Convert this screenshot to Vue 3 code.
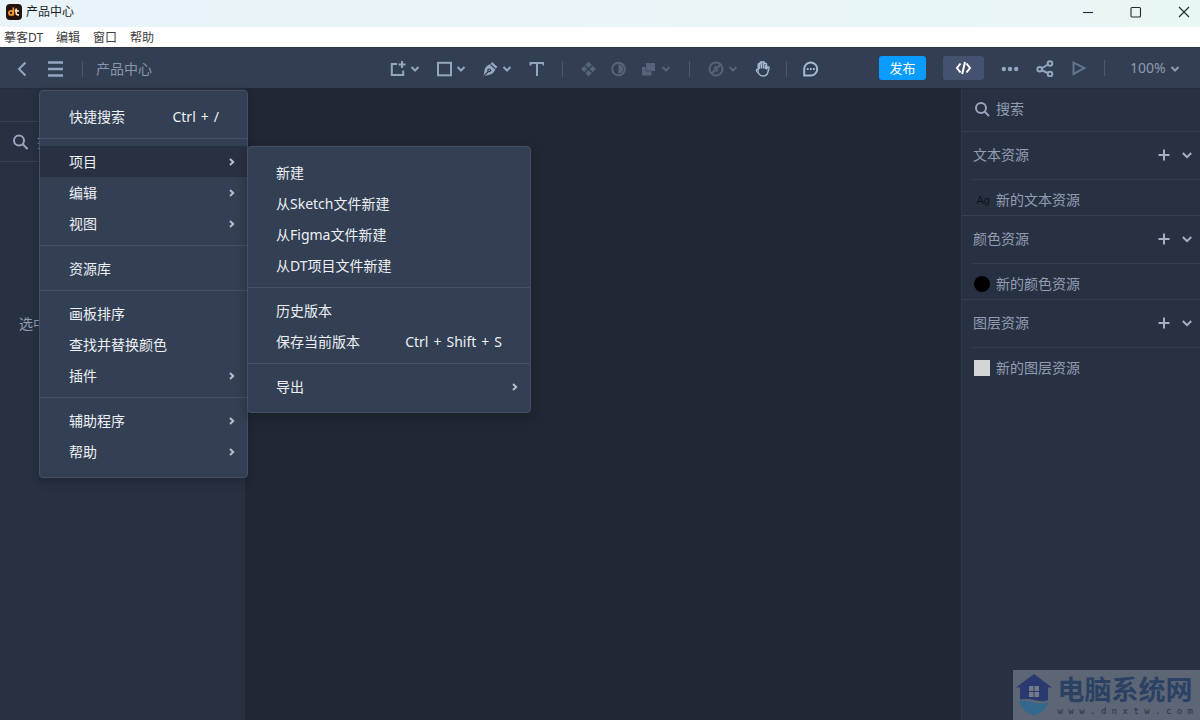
<script setup>
const appMenus = ['摹客DT', '编辑', '窗口', '帮助']

const menuGroups = [
  [{ label: '快捷搜索', keys: ['Ctrl', '+', '/'] }],
  [
    { label: '项目', more: true, open: true },
    { label: '编辑', more: true },
    { label: '视图', more: true },
  ],
  [{ label: '资源库' }],
  [{ label: '画板排序' }, { label: '查找并替换颜色' }, { label: '插件', more: true }],
  [
    { label: '辅助程序', more: true },
    { label: '帮助', more: true },
  ],
]

const projectGroups = [
  [
    { label: '新建' },
    { label: '从Sketch文件新建' },
    { label: '从Figma文件新建' },
    { label: '从DT项目文件新建' },
  ],
  [{ label: '历史版本' }, { label: '保存当前版本', keys: ['Ctrl', '+', 'Shift', '+', 'S'] }],
  [{ label: '导出', more: true }],
]

const resources = [
  { title: '文本资源', item: '新的文本资源', kind: 'text' },
  { title: '颜色资源', item: '新的颜色资源', kind: 'color' },
  { title: '图层资源', item: '新的图层资源', kind: 'layer' },
]
</script>

<template>
  <div class="app">
    <header class="titlebar">
      <svg class="logo" viewBox="0 0 16 16" aria-hidden="true">
        <rect width="16" height="16" rx="4" fill="#24120d" />
        <g fill="none" stroke-width="1.7">
          <circle cx="5" cy="8.9" r="2" stroke="#f39a35" />
          <path d="M7.3 3.5v8" stroke="#f39a35" />
          <path d="M10.2 4.6v4.7q0 1.6 1.6 1.6h1.2M8.8 6.8h4" stroke="#fbe3c0" />
        </g>
      </svg>
      <span class="app-name">产品中心</span>
      <div class="window-buttons">
        <button aria-label="最小化"><svg viewBox="0 0 12 12"><path d="M1 6.5h10" /></svg></button>
        <button aria-label="最大化"><svg viewBox="0 0 12 12"><rect x="1" y="1.5" width="9.500" height="9.500" rx="1" /></svg></button>
        <button aria-label="关闭"><svg viewBox="0 0 12 12"><path d="M1 1l10 10M11 1L1 11" /></svg></button>
      </div>
    </header>

    <nav class="menubar">
      <button v-for="m in appMenus" :key="m">{{ m }}</button>
    </nav>

    <div class="toolbar">
      <div class="side-left">
        <button class="back" aria-label="返回">
          <svg width="10" height="16" viewBox="0 0 10 16"><path d="M8.500 1.500L2 8l6.500 6.500" class="line" /></svg>
        </button>
        <button class="burger" aria-label="菜单">
          <svg width="16" height="16" viewBox="0 0 16 16"><path d="M1 1.500h15M1 8h15M1 14.500h15" class="line heavy" /></svg>
        </button>
        <i class="sep"></i>
        <span class="doc-name">产品中心</span>
      </div>

      <div class="tools">
        <div class="tool-group">
          <button class="tool" aria-label="画板">
            <svg class="icon" viewBox="0 0 16 16"><path d="M7 3H1.800v11h11.400V9.500M12 0v7M8.500 3.500h7" class="line" /></svg>
            <svg class="caret" viewBox="0 0 10 10"><path d="M1.500 3L5 6.500 8.500 3" class="line" /></svg>
          </button>
          <button class="tool" aria-label="形状">
            <svg class="icon" viewBox="0 0 16 16"><rect x="2" y="1.800" width="13" height="12.500" class="line" /></svg>
            <svg class="caret" viewBox="0 0 10 10"><path d="M1.500 3L5 6.500 8.500 3" class="line" /></svg>
          </button>
          <button class="tool" aria-label="钢笔">
            <svg class="icon" viewBox="0 0 16 16">
              <path d="M10.200 1l5.300 5-2 1.800c-.8 3-2.600 5.200-6 6L1.500 15.200l1-6.200c.9-3.300 2.800-5 5.900-6z" fill="currentColor" />
              <path d="M1.800 15l4.500-4.500M8.500 3.500l4.800 4.400" stroke="#323e51" stroke-width="1.100" fill="none" />
              <circle cx="7.200" cy="9.300" r="1.900" fill="#323e51" />
              <circle cx="7.200" cy="9.300" r=".7" fill="currentColor" />
            </svg>
            <svg class="caret" viewBox="0 0 10 10"><path d="M1.500 3L5 6.500 8.500 3" class="line" /></svg>
          </button>
          <button class="tool" aria-label="文本">
            <svg class="icon" viewBox="0 0 16 16"><path d="M2.500 4.500V2h13v2.500M9 2v13" class="line" /></svg>
          </button>
        </div>
        <i class="sep"></i>
        <div class="tool-group dim">
          <button class="tool" aria-label="组件" disabled>
            <svg class="icon" viewBox="0 0 16 16"><path fill="currentColor" d="M7.500.5l3.200 3.200-3.200 3.200-3.200-3.200zM3.300 4.800L6.500 8l-3.200 3.200L.1 8zM11.700 4.800L14.900 8l-3.200 3.200L8.500 8zM7.500 9.100l3.200 3.200-3.200 3.200-3.200-3.200z" /></svg>
          </button>
          <button class="tool" aria-label="蒙版" disabled>
            <svg class="icon" viewBox="0 0 16 16"><circle cx="7.500" cy="8" r="6.300" class="line" /><path d="M7.500 3.300v9.400a4.700 4.700 0 0 0 0-9.400z" fill="currentColor" /></svg>
          </button>
          <button class="tool" aria-label="布尔运算" disabled>
            <svg class="icon" viewBox="0 0 16 16"><path d="M5 2h9v8h-3.500v4.500H1V6h4z" fill="currentColor" /><path d="M5 6.500V10h5.500" stroke="#323e51" stroke-width=".6" fill="none" /></svg>
            <svg class="caret" viewBox="0 0 10 10"><path d="M1.500 3L5 6.500 8.500 3" class="line" /></svg>
          </button>
        </div>
        <i class="sep"></i>
        <div class="tool-group">
          <button class="tool dim" aria-label="切图" disabled>
            <svg class="icon" viewBox="0 0 16 16"><circle cx="8" cy="8" r="6.500" class="line" /><path d="M12.500 3.500l-9 9" class="line" /><path d="M4.800 7.500L8 4.600l.8 2.600zM11.200 8.500L8 11.400l-.8-2.600z" fill="currentColor" /></svg>
            <svg class="caret" viewBox="0 0 10 10"><path d="M1.500 3L5 6.500 8.500 3" class="line" /></svg>
          </button>
          <button class="tool" aria-label="抓手">
            <svg class="icon bright" viewBox="0 0 16 16">
              <path d="M4.200 9V3.600q0-1.200 1-1.200t1 1.200V1.900q0-1.100 1.100-1.100t1.100 1.100v-.2q0-1 1-1t1 1.200v1.500q0-1.100 1.100-1.100t1.100 1.100v5.200l.6-1.800q.5-1.100 1.300-.8t.5 1.500l-1.300 4.200q-1 3.300-4.600 3.300-3 0-4.200-2.300L2.700 10.200q-.6-1.300.2-1.700t1.300.5z" class="thin" />
              <path d="M5.300 8V3M7.300 7.500V2M9.400 7.500V2M11.400 8V4" stroke="currentColor" stroke-width="1.500" fill="none" />
            </svg>
          </button>
          <i class="divider"></i>
          <button class="tool" aria-label="评论">
            <svg class="icon bright" viewBox="0 0 16 16"><path d="M1.200 14.500V8A6.500 6.500 0 1 1 7.700 14.500z" class="line" /><path d="M3.800 8h1.800M6.900 8h1.800M10 8h1.800" class="line" /></svg>
          </button>
        </div>
      </div>

      <div class="side-right">
        <button class="publish">发布</button>
        <button class="code" aria-label="代码">
          <svg width="17" height="16" viewBox="0 0 17 16"><path d="M5.500 3.500L2 8l3.500 4.500M11.500 3.500L15 8l-3.500 4.500M10 2L7.200 14" fill="none" stroke="#fff" stroke-width="2" /></svg>
        </button>
        <button aria-label="更多">
          <svg width="18" height="16" viewBox="0 0 18 16" fill="currentColor"><circle cx="2.800" cy="9" r="2.200" /><circle cx="9" cy="9" r="2.200" /><circle cx="15.200" cy="9" r="2.200" /></svg>
        </button>
        <button aria-label="分享">
          <svg width="18" height="18" viewBox="0 0 18 18"><path d="M5.500 9.500l6.500-4M5.500 11l6 3" class="line" /><g class="line"><circle cx="3.700" cy="10.200" r="2.300" /><circle cx="14" cy="4.500" r="2.300" /><circle cx="14" cy="15" r="2.300" /></g></svg>
        </button>
        <button aria-label="播放">
          <svg class="play" width="16" height="16" viewBox="0 0 16 16"><path d="M2.500 2.500v11.500L13.500 8z" class="line" /></svg>
        </button>
        <i class="divider"></i>
        <label class="zoom">
          <select aria-label="缩放"><option>100%</option></select>
          <svg class="caret" viewBox="0 0 10 10"><path d="M1.500 4L5 7.500 8.500 4" class="line" /></svg>
        </label>
      </div>
    </div>

    <main class="workspace">
      <aside class="left-panel">
        <div class="tabs"></div>
        <label class="panel-search">
          <svg width="16" height="16" viewBox="0 0 16 16"><circle cx="7" cy="6.500" r="5" class="line" /><path d="M10.500 10l5 5" class="line" /></svg>
          <input type="text" aria-label="搜索图层" placeholder="搜索" />
        </label>
        <p class="hint">选中</p>
      </aside>

      <section class="canvas"></section>

      <aside class="right-panel">
        <label class="res-search">
          <svg width="16" height="16" viewBox="0 0 16 16"><circle cx="7" cy="7" r="5" class="line" /><path d="M10.500 10.500l4.500 4.500" class="line" /></svg>
          <input type="text" aria-label="搜索资源" placeholder="搜索" />
        </label>
        <section v-for="r in resources" :key="r.title" class="res">
          <div class="res-head">
            <h2>{{ r.title }}</h2>
            <button aria-label="添加"><svg width="12" height="12" viewBox="0 0 12 12"><path d="M6 .5v11M.5 6h11" class="line" /></svg></button>
            <button aria-label="展开"><svg width="10" height="12" viewBox="0 0 10 12"><path d="M.8 4L5 8.200 9.200 4" class="line" /></svg></button>
          </div>
          <div class="res-item">
            <span class="swatch" :class="r.kind">{{ r.kind === 'text' ? 'Ag' : '' }}</span>
            <span>{{ r.item }}</span>
          </div>
        </section>
      </aside>

      <ul class="menu main-menu">
        <template v-for="(g, gi) in menuGroups" :key="gi">
          <li v-if="gi" class="rule" role="separator"></li>
          <li v-for="it in g" :key="it.label" class="entry" :class="{ open: it.open }">
            <button>
              <span>{{ it.label }}</span>
              <kbd v-if="it.keys"><span v-for="(k, ki) in it.keys" :key="ki">{{ k }}</span></kbd>
              <svg v-if="it.more" class="more" viewBox="0 0 6 8"><path d="M1 1l3.200 3L1 7" class="line" /></svg>
            </button>
            <ul v-if="it.open" class="menu sub-menu">
              <template v-for="(sg, si) in projectGroups" :key="si">
                <li v-if="si" class="rule" role="separator"></li>
                <li v-for="s in sg" :key="s.label" class="entry">
                  <button>
                    <span>{{ s.label }}</span>
                    <kbd v-if="s.keys"><span v-for="(k, ki) in s.keys" :key="ki">{{ k }}</span></kbd>
                    <svg v-if="s.more" class="more" viewBox="0 0 6 8"><path d="M1 1l3.200 3L1 7" class="line" /></svg>
                  </button>
                </li>
              </template>
            </ul>
          </li>
        </template>
      </ul>

      <div class="site-mark">
        <svg width="36" height="42" viewBox="0 0 36 42" aria-hidden="true">
          <path d="M18 0l18 13.500h-4V26c-7 4-15-3-28-.5v-12H0z" fill="#2a3a70" />
          <path d="M3 27c11-2 18 5 29.500 1.500C30 35 25 39 18 41.500 10 39 5 34 3 27z" fill="#33698f" />
          <path d="M13 12h4.500v5H13zM18.500 12H23v5h-4.500zM13 18h4.500v5H13zM18.500 18H23v5h-4.500z" fill="#737b88" />
        </svg>
        <div class="mark-text">
          <strong>电脑系统网</strong>
          <span>w w w . d n x t w . c o m</span>
        </div>
      </div>
    </main>
  </div>
</template>

<style>
html,
body,
#app {
  height: 100%;
}
body {
  margin: 0;
}
</style>

<style scoped>
.app {
  --bar: #323e51;
  --panel: #283142;
  --edge: #344054;
  --icon: #97a4c0;
  --label: #929db3;
  display: flex;
  flex-direction: column;
  height: 100%;
  overflow: hidden;
  font: 14px/20px "Noto Sans", "Noto Sans CJK SC", sans-serif;
  color: var(--label);
}
.app * {
  box-sizing: border-box;
}
button {
  display: flex;
  align-items: center;
  padding: 0;
  border: 0;
  background: none;
  color: inherit;
  font: inherit;
}
svg {
  display: block;
  flex: none;
}
.line {
  fill: none;
  stroke: currentColor;
  stroke-width: 2;
}
.heavy {
  stroke-width: 2.4;
}
.thin {
  fill: none;
  stroke: currentColor;
  stroke-width: 1.4;
}
input,
select {
  padding: 0;
  border: 0;
  outline: 0;
  background: none;
  color: inherit;
  font: inherit;
  appearance: none;
}
input {
  flex: 1;
  min-width: 0;
}
input::placeholder {
  color: var(--label);
  opacity: 1;
}

.titlebar {
  display: flex;
  flex: none;
  align-items: center;
  gap: 4px;
  height: 27px;
  padding: 0 10px 4px 6px;
  background: linear-gradient(90deg, #e9f3fa, #e8f6f4);
  color: #1c1f24;
  font-size: 12px;
}
.logo {
  width: 16px;
  height: 16px;
}
.window-buttons {
  display: flex;
  gap: 36px;
  margin-left: auto;
}
.window-buttons svg {
  width: 12px;
  height: 12px;
  fill: none;
  stroke: #22282c;
  stroke-width: 1.1;
}
.menubar {
  display: flex;
  flex: none;
  gap: 13px;
  height: 20px;
  padding: 2px 0 0 4px;
  background: #fff;
  color: #3c3c3c;
  font-size: 12px;
}

.toolbar {
  display: grid;
  flex: none;
  grid-template-columns: 1fr auto 1fr;
  align-items: center;
  height: 41px;
  padding: 0 8px 0 17px;
  background: var(--bar);
  border-top: 1px solid #2b3548;
  color: var(--icon);
}
.side-left,
.tools,
.tool-group,
.side-right {
  display: flex;
  align-items: center;
}
.side-left,
.tools {
  padding-top: 1px;
}
.side-left {
  gap: 20px;
}
.side-left .sep {
  margin: 0 -7px 0 -1px;
}
.doc-name {
  color: #8995ad;
}
.tools {
  gap: 18px;
}
.tool-group {
  gap: 16px;
}
.tool {
  gap: 4px;
}
.icon {
  width: 16px;
  height: 16px;
}
.caret {
  width: 10px;
  height: 10px;
}
.bright {
  color: #a9b7d4;
}
.dim {
  gap: 14px;
  color: #56637a;
}
.tool.dim {
  gap: 4px;
}
.sep,
.divider {
  width: 1px;
  height: 16px;
  background: #4b586e;
}
.side-right {
  justify-content: flex-end;
  gap: 17px;
}
.publish,
.code {
  justify-content: center;
  height: 24px;
  border-radius: 3px;
}
.publish {
  width: 47px;
  background: #0a9bff;
  color: #fff;
  font-size: 13px;
}
.code {
  width: 41px;
  background: #445270;
}
.play {
  color: #64728b;
}
.zoom {
  display: flex;
  align-items: center;
  gap: 4px;
  padding: 0 12px 0 8px;
  color: #8f9bb1;
}

.workspace {
  position: relative;
  display: grid;
  flex: 1;
  grid-template-columns: 245px 1fr 239px;
  min-height: 0;
  background: #212733;
}
.left-panel,
.right-panel {
  background: var(--panel);
  border-top: 1px solid #252d3d;
}
.right-panel {
  border-left: 1px solid #303849;
}
.tabs {
  height: 33px;
  border-bottom: 1px solid var(--edge);
}
.panel-search,
.res-search {
  display: flex;
  align-items: center;
  gap: 9px;
  height: 40px;
  padding: 0 12px;
  border-bottom: 1px solid var(--edge);
  color: var(--icon);
}
.res-search {
  gap: 6px;
  height: 43px;
  padding-bottom: 2px;
}
.hint {
  margin: 152px 0 0 19px;
}
.res-head {
  display: flex;
  align-items: center;
  gap: 12px;
  height: 48px;
  margin-left: 11px;
  padding: 0 8px 2px 0;
  border-bottom: 1px solid var(--edge);
  color: #a5b0c6;
}
.res-head h2 {
  flex: 1;
  margin: 0;
  color: var(--label);
  font-size: 14px;
  font-weight: 400;
}
.res-item {
  display: flex;
  align-items: center;
  gap: 6px;
  height: 36px;
  padding: 4px 0 0 12px;
  border-bottom: 1px solid var(--edge);
}
.res:last-child .res-item {
  border-bottom-color: transparent;
}
.swatch {
  width: 16px;
  height: 16px;
}
.swatch.text {
  color: #0e1219;
  font: 11px/16px "Liberation Sans", sans-serif;
  text-align: right;
}
.swatch.color {
  border-radius: 50%;
  background: #000;
}
.swatch.layer {
  background: #d4d6d5;
}

.menu {
  position: absolute;
  margin: 0;
  padding: 10px 0;
  border: 1px solid #435066;
  border-radius: 4px;
  background: #333f52;
  box-shadow: 0 4px 10px rgba(15, 20, 30, 0.35);
  color: #eceff6;
  list-style: none;
}
.main-menu {
  top: 2px;
  left: 39px;
  width: 209px;
}
.sub-menu {
  top: 0;
  left: 100%;
  width: 284px;
}
.rule {
  height: 1px;
  margin: 6px 0 7px;
  background: #435066;
}
.entry {
  position: relative;
}
.entry > button {
  justify-content: space-between;
  width: 100%;
  height: 31px;
  padding: 0 28px 0 29px;
}
.sub-menu .entry > button {
  padding-left: 28px;
}
.open > button {
  background: #293042;
}
.more {
  width: 6px;
  height: 8px;
  margin-right: -16px;
  color: #b5bfd1;
}
kbd {
  display: flex;
  gap: 5px;
  font: inherit;
}

.site-mark {
  position: absolute;
  right: 0;
  bottom: 0;
  display: flex;
  align-items: center;
  gap: 6px;
  height: 50px;
  padding: 0 7px 0 3px;
  background: #5d6675;
}
.mark-text {
  display: flex;
  flex-direction: column;
  color: #2a4164;
}
.mark-text strong {
  font: 700 27px/32px "Noto Sans CJK SC", sans-serif;
}
.mark-text span {
  font: 9px/12px "DejaVu Sans Mono", monospace;
  color: #2b3547;
}
</style>
